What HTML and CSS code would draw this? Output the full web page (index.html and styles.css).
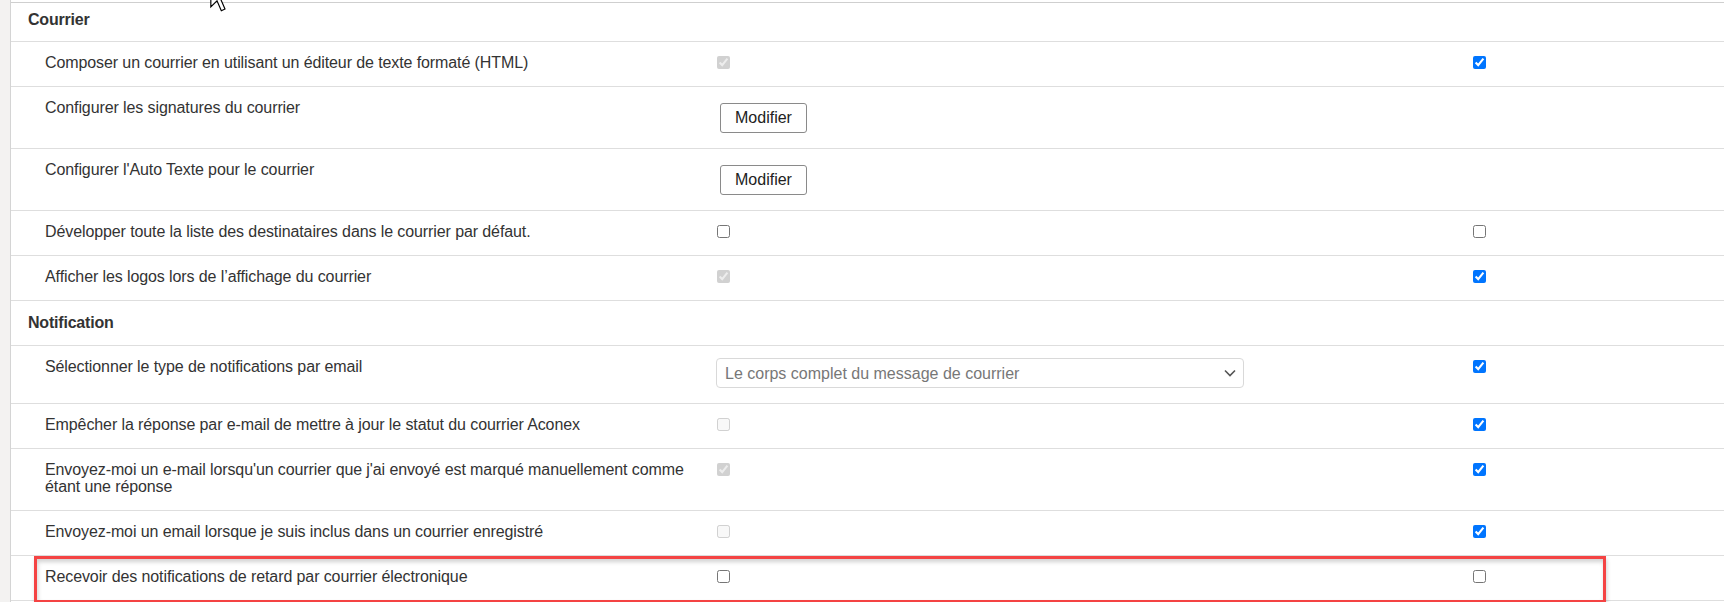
FILE: index.html
```html
<html>

<head>
    <link rel="stylesheet" href="styles.css">
</head>

<body>

    <div class="page">
        <div class="rail"></div>

        <div class="settings">
            <div class="section-head first">Courrier</div>

            <div class="row">
                <div class="label">Composer un courrier en utilisant un éditeur de texte formaté (HTML)</div>
                <div class="cell"><input type="checkbox" checked disabled></div>
                <div class="cell"><input type="checkbox" checked></div>
            </div>

            <div class="row">
                <div class="label">Configurer les signatures du courrier</div>
                <div class="cell"><button class="btn">Modifier</button></div>
                <div class="cell"></div>
            </div>

            <div class="row">
                <div class="label">Configurer l'Auto Texte pour le courrier</div>
                <div class="cell"><button class="btn">Modifier</button></div>
                <div class="cell"></div>
            </div>

            <div class="row">
                <div class="label">Développer toute la liste des destinataires dans le courrier par défaut.</div>
                <div class="cell"><input type="checkbox"></div>
                <div class="cell"><input type="checkbox"></div>
            </div>

            <div class="row">
                <div class="label">Afficher les logos lors de l’affichage du courrier</div>
                <div class="cell"><input type="checkbox" checked disabled></div>
                <div class="cell"><input type="checkbox" checked></div>
            </div>

            <div class="section-head">Notification</div>

            <div class="row">
                <div class="label">Sélectionner le type de notifications par email</div>
                <div class="cell">
                    <div class="select-wrap">
                        <select class="select">
                            <option>Le corps complet du message de courrier</option>
                        </select>
                        <svg class="chevron" width="12" height="8" viewBox="0 0 12 8">
                            <path d="M1 1.5 L6 6.5 L11 1.5" fill="none" stroke="#555" stroke-width="1.6" />
                        </svg>
                    </div>
                </div>
                <div class="cell"><input type="checkbox" checked></div>
            </div>

            <div class="row">
                <div class="label">Empêcher la réponse par e-mail de mettre à jour le statut du courrier Aconex</div>
                <div class="cell"><input type="checkbox" disabled></div>
                <div class="cell"><input type="checkbox" checked></div>
            </div>

            <div class="row">
                <div class="label">Envoyez-moi un e-mail lorsqu'un courrier que j'ai envoyé est marqué manuellement comme étant une réponse</div>
                <div class="cell"><input type="checkbox" checked disabled></div>
                <div class="cell"><input type="checkbox" checked></div>
            </div>

            <div class="row">
                <div class="label">Envoyez-moi un email lorsque je suis inclus dans un courrier enregistré</div>
                <div class="cell"><input type="checkbox" disabled></div>
                <div class="cell"><input type="checkbox" checked></div>
            </div>

            <div class="row">
                <div class="label">Recevoir des notifications de retard par courrier électronique</div>
                <div class="cell"><input type="checkbox"></div>
                <div class="cell"><input type="checkbox"></div>
            </div>
        </div>

        <!-- annotation drawn over the last row -->
        <div class="highlight"></div>

        <svg class="cursor" width="20" height="32" viewBox="0 0 12 19">
            <path d="M0.5 0.5 L0.5 16 L4.2 12.4 L6.8 18.3 L9 17.3 L6.5 11.6 L11.3 11.6 Z" fill="#fff" stroke="#000" stroke-width="0.7" />
        </svg>
    </div>

</body>

</html>
```

FILE: styles.css
```css
body {
    margin: 0;
    font-family: "Liberation Sans", Arial, sans-serif;
    font-size: 16px;
    color: #333;
    background-color: #fff;
}

.page {
    display: flex;
    position: relative;
    height: 602px;
    overflow: hidden;
}

.rail {
    width: 10px;
    flex-shrink: 0;
    background-color: #f3f2f1;
    border-right: 1px solid #d4d4d4;
}

.settings {
    flex: 1;
    margin-top: 2px;
    border-top: 1px solid #cfcfcf;
}

.section-head {
    font-weight: bold;
    line-height: 17px;
    letter-spacing: -0.2px;
    padding: 13px 17px 14px;
    border-bottom: 1px solid #dedede;
}

.section-head.first {
    padding-top: 8px;
    padding-bottom: 13px;
}

.row {
    display: grid;
    grid-template-columns: 705px 756px 1fr;
    line-height: 17px;
    border-bottom: 1px solid #dedede;
}

.row > div {
    padding: 12px 0 15px;
}

.row > .label {
    padding-left: 34px;
    padding-right: 20px;
    letter-spacing: -0.1px;
}

.cell input[type="checkbox"] {
    display: block;
    width: 13px;
    height: 13px;
    margin: 2px 0 0 1px;
}

.btn {
    display: block;
    height: 30px;
    margin: 4px 0 0 4px;
    padding: 0 14px;
    font-family: "Liberation Sans", Arial, sans-serif;
    font-size: 16px;
    color: #222;
    background-color: #fff;
    border: 1px solid #8a8a8a;
    border-radius: 3px;
}

.select-wrap {
    position: relative;
    width: 528px;
}

.select {
    display: block;
    width: 528px;
    height: 30px;
    padding: 0 30px 0 8px;
    font-family: "Liberation Sans", Arial, sans-serif;
    font-size: 16px;
    color: #777;
    background-color: #fff;
    border: 1px solid #d9d9d9;
    border-radius: 4px;
    appearance: none;
    -webkit-appearance: none;
}

.chevron {
    position: absolute;
    right: 8px;
    top: 11px;
}

.highlight {
    position: absolute;
    left: 34px;
    top: 556px;
    width: 1572px;
    height: 47px;
    box-sizing: border-box;
    border: 3px solid #f44343;
    box-shadow: inset 1px 3px 4px rgba(0, 0, 0, 0.18), 1px 3px 4px rgba(0, 0, 0, 0.18);
}

.cursor {
    position: absolute;
    left: 210px;
    top: -20px;
}
```
